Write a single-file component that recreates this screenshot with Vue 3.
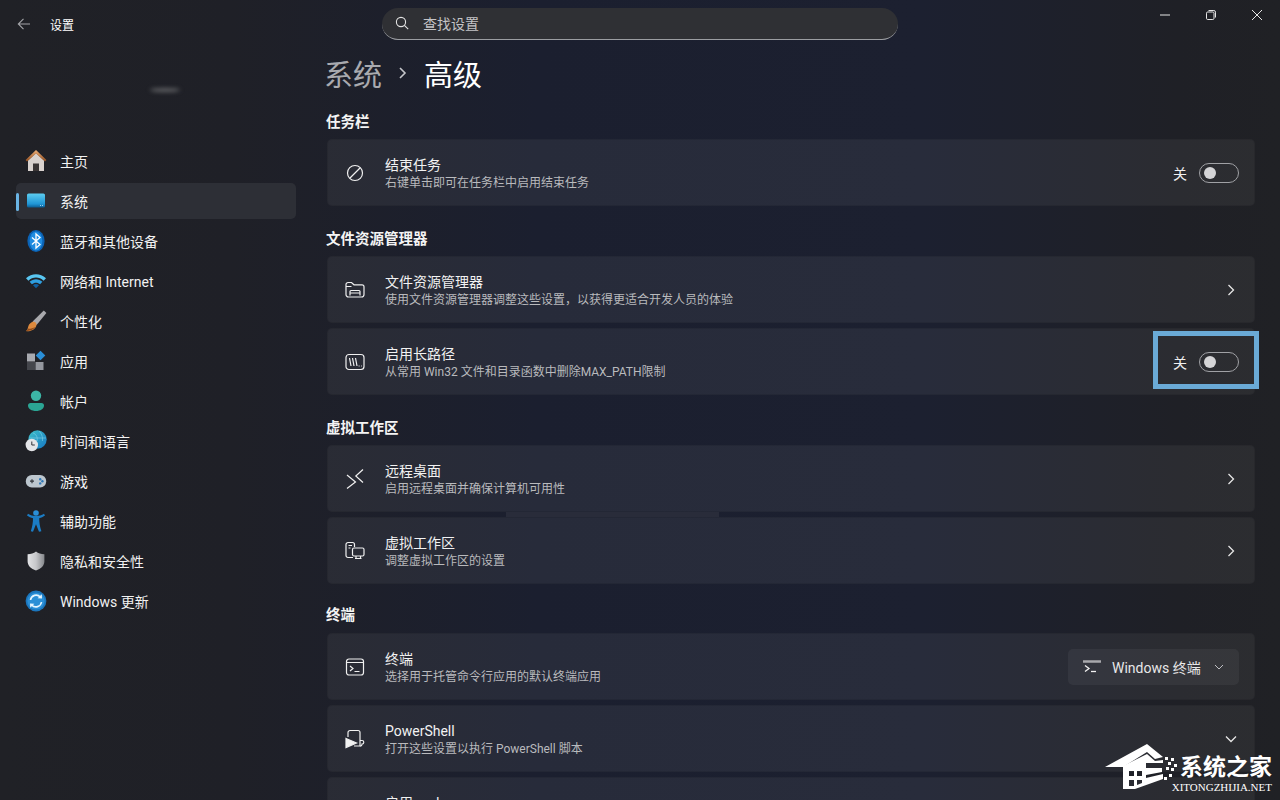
<template>
  <div class="settings">
    <!-- title bar -->
    <header class="titlebar">
      <div class="title-left">
        <svg class="back" viewBox="0 0 14 14" width="14" height="14"><path d="M13 7H1.500M6.500 1.800 1.300 7l5.200 5.200" fill="none" stroke="#a3a4a8" stroke-width="1.100"/></svg>
        <span>设置</span>
      </div>
      <div class="search">
        <svg viewBox="0 0 14 14" width="14" height="14"><circle cx="6" cy="6" r="4.600" fill="none" stroke="#e4e4e4" stroke-width="1.100"/><path d="m9.400 9.400 3.800 3.800" stroke="#e4e4e4" stroke-width="1.100"/></svg>
        <span>查找设置</span>
      </div>
      <div class="win-btns">
        <svg viewBox="0 0 10 10" width="10" height="10"><path d="M0 5h10" stroke="#e6e6e6" stroke-width="1"/></svg>
        <svg viewBox="0 0 10 10" width="10" height="10"><rect x=".5" y="2" width="7.500" height="7.500" rx="1.200" fill="none" stroke="#e6e6e6"/><path d="M2.500.5h5.300a1.700 1.700 0 0 1 1.700 1.700v5.300" fill="none" stroke="#e6e6e6"/></svg>
        <svg viewBox="0 0 10 10" width="10" height="10"><path d="m0 0 10 10M10 0 0 10" stroke="#e6e6e6" stroke-width="1"/></svg>
      </div>
    </header>

    <div class="body">
      <!-- side navigation -->
      <aside class="sidebar">
        <div class="account-smudge"></div>
        <nav class="nav">
          <a class="nav-item">
            <svg class="nav-icon" viewBox="0 0 22 22"><defs><linearGradient id="roof" x1="0" y1="0" x2="0" y2="1"><stop offset="0" stop-color="#f0b078"/><stop offset="1" stop-color="#8d4a1c"/></linearGradient></defs><path d="M3 10.500 11 3l8 7.500V21H3z" fill="#d9d2ce"/><path d="M8 21v-7.500h6V21z" fill="#3a3535"/><path d="M11 0 .6 10l1.400 1.600L11 3.600l9 8 1.400-1.600z" fill="url(#roof)"/></svg>
            <span>主页</span>
          </a>
          <a class="nav-item active">
            <svg class="nav-icon" viewBox="0 0 22 22"><defs><linearGradient id="screen" x1="0" y1="0" x2="0" y2="1"><stop offset="0" stop-color="#5ccdf0"/><stop offset=".75" stop-color="#1f94d4"/><stop offset="1" stop-color="#0b5c92"/></linearGradient></defs><rect x="2" y="3.500" width="18" height="14" rx="1.600" fill="url(#screen)"/><path d="M15 15.500h1M17 15.500h1" stroke="#bfe6f7" stroke-width=".8"/></svg>
            <span>系统</span>
          </a>
          <a class="nav-item">
            <svg class="nav-icon" viewBox="0 0 22 22"><ellipse cx="11" cy="11" rx="8.600" ry="11" fill="#0b62b4"/><ellipse cx="11" cy="11" rx="6.400" ry="9.600" fill="#1f8be0"/><path d="m7 7.400 8 7.200L11 18V4l4 3.400-8 7.200" fill="none" stroke="#fff" stroke-width="1.300"/></svg>
            <span>蓝牙和其他设备</span>
          </a>
          <a class="nav-item">
            <svg class="nav-icon" viewBox="0 0 22 22"><path d="M1 8.200C6.600 2.800 15.400 2.800 21 8.200l-2.400 2.500C14.200 6.500 7.800 6.500 3.400 10.700z" fill="#59c6f1"/><path d="M4.600 11.800c3.600-3.400 9.200-3.400 12.800 0l-2.300 2.400c-2.300-2.100-5.900-2.100-8.200 0z" fill="#2f9fe0"/><path d="M8 15.200c1.700-1.500 4.300-1.500 6 0l-3 3.100z" fill="#0f5f9f"/></svg>
            <span>网络和 Internet</span>
          </a>
          <a class="nav-item">
            <svg class="nav-icon" viewBox="0 0 22 22"><path d="M18.800.6 21.400 3 11.600 15 7.600 11.400z" fill="#a9a9ad"/><path d="M7.600 11.800c2.400-.6 4.400 1.200 3.800 3.600C10.600 19.200 5 22 1 21c2-1.400 1.600-3 2.400-5 .7-1.800 2.300-3.600 4.200-4.200z" fill="#dd8a3e"/><path d="M1 21c3.800.4 8-1.600 9.800-4.400C8 19 4.600 18.800 3 18.400 2.700 19.400 2.200 20.200 1 21z" fill="#8f4a1a"/></svg>
            <span>个性化</span>
          </a>
          <a class="nav-item">
            <svg class="nav-icon" viewBox="0 0 22 22"><rect x="2" y="3.500" width="8" height="8" fill="#a8aab0"/><rect x="2" y="12" width="8" height="8" fill="#44464c"/><rect x="10.500" y="12" width="8" height="8" fill="#94979e"/><path d="m15.500 .8 4.800 4.700-4.800 4.800-4.800-4.800z" fill="#2a8fd8"/></svg>
            <span>应用</span>
          </a>
          <a class="nav-item">
            <svg class="nav-icon" viewBox="0 0 22 22"><circle cx="11" cy="5.800" r="5.200" fill="#3cb6a6"/><path d="M3 15.500c0-1.500 1-2.500 2.500-2.500h11c1.500 0 2.500 1 2.500 2.500 0 3.400-3.600 5.500-8 5.500s-8-2.100-8-5.500z" fill="#2ba594"/></svg>
            <span>帐户</span>
          </a>
          <a class="nav-item">
            <svg class="nav-icon" viewBox="0 0 22 22"><defs><linearGradient id="globe" x1="0" y1="0" x2="1" y2="1"><stop offset="0" stop-color="#3ec0c8"/><stop offset="1" stop-color="#1778c4"/></linearGradient></defs><circle cx="12.500" cy="9.500" r="9.200" fill="url(#globe)"/><path d="M8 3c3 1 5 4 4 8M14 1c2 2 4 5 3.500 10M4 8h17" stroke="#7fd2e8" stroke-width=".6" fill="none"/><circle cx="6.800" cy="15" r="6.200" fill="#e4e5e8"/><path d="M6.800 11.500V15h3" fill="none" stroke="#33343a" stroke-width="1"/></svg>
            <span>时间和语言</span>
          </a>
          <a class="nav-item">
            <svg class="nav-icon" viewBox="0 0 22 22"><rect x=".8" y="5" width="20.400" height="12.500" rx="6" fill="#bcc6ce"/><path d="M5 11.200h4M7 9.200v4" stroke="#33373d" stroke-width="1.200"/><circle cx="15.200" cy="9.200" r="1.200" fill="#2f78b8"/><circle cx="17.400" cy="11.300" r="1.200" fill="#2f78b8"/><circle cx="15.200" cy="13.400" r="1.200" fill="#2f78b8"/></svg>
            <span>游戏</span>
          </a>
          <a class="nav-item">
            <svg class="nav-icon" viewBox="0 0 22 22"><circle cx="11" cy="3" r="2.800" fill="#2a8fd8"/><path d="M2 5.600 3 3.800c2.500 1.400 5 2.200 8 2.200s5.500-.8 8-2.200l1 1.800c-1.900 1.300-3.800 2.200-5.800 2.700 0 4 .6 8 2.200 13L14 21.800l-3-7.500-3 7.500-2.200-.5c1.600-5 2.200-9 2.200-13-2.200-.5-4.100-1.400-6-2.700z" fill="#1b7cc4"/></svg>
            <span>辅助功能</span>
          </a>
          <a class="nav-item">
            <svg class="nav-icon" viewBox="0 0 22 22"><defs><linearGradient id="shield" x1="0" y1="0" x2="1" y2="0"><stop offset="0" stop-color="#e2e3e5"/><stop offset=".5" stop-color="#c6c7ca"/><stop offset="1" stop-color="#85878b"/></linearGradient></defs><path d="M11 1.500c2.300 1.800 5 2.700 8.400 2.700v7c0 4.500-3.400 7.500-8.400 9.300-5-1.800-8.400-4.800-8.400-9.300v-7c3.400 0 6.100-.9 8.400-2.700z" fill="url(#shield)"/></svg>
            <span>隐私和安全性</span>
          </a>
          <a class="nav-item">
            <svg class="nav-icon" viewBox="0 0 22 22"><circle cx="11" cy="11" r="10.400" fill="#1b76bd"/><circle cx="11" cy="11" r="8.600" fill="#2a8fd6"/><path d="M5.500 10a5.600 5.600 0 0 1 9.800-2.900M16.500 12a5.600 5.600 0 0 1-9.800 2.900" fill="none" stroke="#e4f5ff" stroke-width="1.600"/><path d="m16.800 4.200.2 4.400-4.400-.3zM5.200 17.800 5 13.400l4.400.3z" fill="#e4f5ff"/></svg>
            <span>Windows 更新</span>
          </a>
        </nav>
      </aside>

      <!-- settings content -->
      <main class="content">
        <h1 class="crumb">
          <span class="crumb-parent">系统</span>
          <svg viewBox="0 0 10 14" width="10" height="14"><path d="m2 2 5 5-5 5" fill="none" stroke="#c5c6ca" stroke-width="1.600"/></svg>
          <span class="crumb-current">高级</span>
        </h1>

        <h2 class="section first">任务栏</h2>
        <div class="row">
          <svg class="row-icon" viewBox="0 0 20 20"><circle cx="10" cy="10" r="7.500"/><path d="M5 15 15 5"/></svg>
          <div class="row-text">
            <div class="row-title">结束任务</div>
            <div class="row-sub">右键单击即可在任务栏中启用结束任务</div>
          </div>
          <span class="toggle-label">关</span>
          <span class="toggle"><i></i></span>
        </div>

        <h2 class="section">文件资源管理器</h2>
        <div class="row">
          <svg class="row-icon" viewBox="0 0 20 20"><path d="M1 14.500V4.500A2 2 0 0 1 3 2.500h3.500L9 4.800h8a2 2 0 0 1 2 2v7.700a2.500 2.500 0 0 1-2.500 2.500h-13A2.500 2.500 0 0 1 1 14.500zM1 6.500h5.500"/><path d="M5 15.500v-4a1 1 0 0 1 1-1h8a1 1 0 0 1 1 1v4M5 13h10"/></svg>
          <div class="row-text">
            <div class="row-title">文件资源管理器</div>
            <div class="row-sub">使用文件资源管理器调整这些设置，以获得更适合开发人员的体验</div>
          </div>
          <svg class="chevron" viewBox="0 0 10 14"><path d="m2.500 2 5 5-5 5"/></svg>
        </div>
        <div class="row gap">
          <svg class="row-icon" viewBox="0 0 20 20"><rect x="1" y="2.500" width="18" height="15" rx="3"/><path d="m4.500 6 1.500 8M7.500 6 9 14M10.500 6l1.500 8M13.600 14h1M16 14h.8"/></svg>
          <div class="row-text">
            <div class="row-title">启用长路径</div>
            <div class="row-sub">从常用 Win32 文件和目录函数中删除MAX_PATH限制</div>
          </div>
          <span class="toggle-label">关</span>
          <span class="toggle"><i></i></span>
          <div class="callout"></div>
        </div>

        <h2 class="section">虚拟工作区</h2>
        <div class="row">
          <svg class="row-icon" viewBox="0 0 20 20"><path d="M2 6l8.500 7L2 19.500M18 .5 10.800 7l7.200 6.500"/></svg>
          <div class="row-text">
            <div class="row-title">远程桌面</div>
            <div class="row-sub">启用远程桌面并确保计算机可用性</div>
          </div>
          <svg class="chevron" viewBox="0 0 10 14"><path d="m2.500 2 5 5-5 5"/></svg>
          <div class="gap-smudge"></div>
        </div>
        <div class="row gap">
          <svg class="row-icon" viewBox="0 0 20 20"><path d="M8 16.500H3a2 2 0 0 1-2-2V3.500a2 2 0 0 1 2-2h4.500a2 2 0 0 1 2 2V6M3.500 4.500h3.500M3.500 7h2"/><rect x="7.500" y="7" width="11.500" height="8" rx="1.500"/><path d="M11 15v2.500M15.500 15v2.500M10 17.500h6.500"/></svg>
          <div class="row-text">
            <div class="row-title">虚拟工作区</div>
            <div class="row-sub">调整虚拟工作区的设置</div>
          </div>
          <svg class="chevron" viewBox="0 0 10 14"><path d="m2.500 2 5 5-5 5"/></svg>
        </div>

        <h2 class="section tight">终端</h2>
        <div class="row">
          <svg class="row-icon" viewBox="0 0 20 20"><rect x="1.500" y="2" width="17" height="16" rx="2.500"/><path d="M1.500 5.500h17M5 9l3 2.500L5 14M9.500 14.500h5"/></svg>
          <div class="row-text">
            <div class="row-title">终端</div>
            <div class="row-sub">选择用于托管命令行应用的默认终端应用</div>
          </div>
          <div class="dropdown">
            <svg viewBox="0 0 18 14" width="18" height="14"><path d="M0 1.500h18" stroke="#a8a9ad" stroke-width="2.500"/><path d="m2 5.500 4 3-4 3" fill="none" stroke="#f2f2f2" stroke-width="1.300"/><path d="M8 11.500h5" stroke="#f2f2f2" stroke-width="1.300"/></svg>
            <span>Windows 终端</span>
            <svg class="dd-arrow" viewBox="0 0 10 6" width="10" height="6"><path d="m1 1 4 4 4-4" fill="none" stroke="#bdbec2" stroke-width="1"/></svg>
          </div>
        </div>
        <div class="row gap">
          <svg class="row-icon" viewBox="0 0 20 20"><path d="M3 8V3.500a2 2 0 0 1 2-2h8a2 2 0 0 1 2 2V17h-6"/><path d="M15 11.500h2a1.800 1.800 0 0 1 0 3.600 1.800 1.800 0 0 1-2 1.900"/><path d="M1 9.500 11.500 14 1 18.500z" fill="#f2f2f2"/></svg>
          <div class="row-text">
            <div class="row-title">PowerShell</div>
            <div class="row-sub">打开这些设置以执行 PowerShell 脚本</div>
          </div>
          <svg class="chevron down" viewBox="0 0 14 10"><path d="m2 2.500 5 5 5-5"/></svg>
        </div>
        <div class="row gap">
          <svg class="row-icon" viewBox="0 0 20 20"></svg>
          <div class="row-text">
            <div class="row-title">启用 sudo</div>
            <div class="row-sub">&nbsp;</div>
          </div>
        </div>
      </main>
    </div>

    <!-- site watermark -->
    <div class="watermark">
      <svg viewBox="0 0 72 46" width="72" height="46">
        <path d="M0 23 42 0 58 13 50 15 42 8 18 23z" fill="#fff"/>
        <path fill-rule="evenodd" d="M18 22 42 10 50 17 58 16V19H41V24H57V28L41 31V34L58 30V35L30 45H18zM24 27H29V32H24zM32 27H37V32H32zM24 36H29V42H24zM32 36H37V39L32 41z" fill="#fff"/>
        <path d="M60 13h3v3h-3zM66 14h3v3h-3zM63 18h3v3h-3zM69 20h3v3h-3zM66 24h3v3h-3zM61 23h3v3h-3zM64 30h3v3h-3zM59 33h3v3h-3z" fill="#fff"/>
      </svg>
      <div class="wm-text">
        <div class="wm-cn">系统之家</div>
        <div class="wm-en">XITONGZHIJIA.NET</div>
      </div>
    </div>
  </div>
</template>

<script setup>
// static screen, nothing to wire up
</script>

<style>
html, body {
  margin: 0;
  background: #1c2030;
  overflow: hidden;
}
</style>

<style scoped>
.settings {
  position: relative;
  width: 1280px;
  height: 800px;
  overflow: hidden;
  color: #fff;
  font-family: Roboto, "Noto Sans CJK SC", sans-serif;
  font-size: 14px;
  background: linear-gradient(90deg, #202126 0%, #1f2027 18%, #1b1f2f 42%, #1c2030 72%, #1f2026 92%, #202125 100%);
}

.titlebar {
  display: grid;
  grid-template-columns: 1fr 516px 1fr;
  align-items: start;
  height: 48px;
}

.title-left {
  display: flex;
  align-items: center;
  gap: 19px;
  height: 48px;
  padding-left: 17px;
  font-size: 12px;
}

.search {
  display: flex;
  align-items: center;
  gap: 14px;
  box-sizing: border-box;
  height: 32px;
  margin-top: 8px;
  padding: 0 0 1px 13px;
  background: #2f3034;
  border-bottom: 1px solid #9b9da1;
  border-radius: 16px;
  color: #c4c4c6;
}

.win-btns {
  display: flex;
  justify-content: flex-end;
  gap: 36px;
  padding: 10px 18px 0 0;
}

.body {
  display: flex;
}

.sidebar {
  position: relative;
  width: 296px;
  padding-left: 16px;
  flex-shrink: 0;
}

.account-smudge {
  position: absolute;
  left: 150px;
  top: 40px;
  width: 30px;
  height: 4px;
  border-radius: 50%;
  background: #5f6063;
  filter: blur(2px);
}

.nav {
  display: flex;
  flex-direction: column;
  gap: 4px;
  width: 280px;
  padding-top: 95px;
}

.nav-item {
  position: relative;
  display: flex;
  align-items: center;
  gap: 13px;
  height: 36px;
  padding-left: 9px;
  border-radius: 5px;
  color: #f2f2f2;
}

.nav-item.active {
  background: #2d2f36;
}

.nav-item.active::before {
  content: "";
  position: absolute;
  left: 0;
  top: 10px;
  width: 3px;
  height: 18px;
  border-radius: 2px;
  background: #6ab4e4;
}

.nav-icon {
  width: 22px;
  height: 22px;
  flex-shrink: 0;
}

.content {
  width: 928px;
  margin-left: 15px;
  flex-shrink: 0;
}

.crumb {
  display: flex;
  align-items: center;
  gap: 16px;
  height: 40px;
  margin: 5px 0 0 -3px;
  font-size: 29px;
  font-weight: 400;
}

.crumb-parent {
  color: #a9aaaf;
}

.section {
  height: 50px;
  margin: 0 0 0 -1px;
  display: flex;
  align-items: center;
  padding-top: 12px;
  box-sizing: border-box;
  font-size: 14.5px;
  font-weight: 600;
  color: #f4f4f4;
}

.section.first {
  height: 46px;
  padding-top: 8px;
}

.section.tight {
  height: 49px;
  padding-top: 10px;
}

.row {
  position: relative;
  display: flex;
  align-items: center;
  box-sizing: border-box;
  height: 67px;
  padding: 0 15px 0 17px;
  background: rgba(255, 255, 255, 0.055);
  border: 1px solid rgba(0, 0, 0, 0.08);
  border-radius: 5px;
}

.row.gap {
  margin-top: 5px;
}

.row-icon {
  width: 20px;
  height: 20px;
  flex-shrink: 0;
  fill: none;
  stroke: #f0f0f0;
  stroke-width: 1.2;
  overflow: visible;
}

.row-text {
  flex: 1;
  margin-left: 20px;
  padding-top: 2px;
}

.row-title {
  line-height: 18px;
  color: #f2f2f2;
}

.row-sub {
  line-height: 18px;
  font-size: 12px;
  color: #b9babd;
}

.toggle-label {
  margin-right: 12px;
  color: #f0f0f0;
}

.toggle {
  display: flex;
  align-items: center;
  box-sizing: border-box;
  width: 40px;
  height: 20px;
  padding-left: 4px;
  border: 1px solid #a0a1a5;
  border-radius: 10px;
}

.toggle i {
  width: 12px;
  height: 12px;
  border-radius: 50%;
  background: #d4d4d6;
}

.chevron {
  width: 10px;
  height: 14px;
  margin-right: 3px;
  fill: none;
  stroke: #e6e6e6;
  stroke-width: 1.3;
}

.chevron.down {
  width: 14px;
  height: 10px;
  margin-right: 1px;
}

.callout {
  position: absolute;
  right: -5px;
  top: 2px;
  width: 106px;
  height: 58px;
  box-sizing: border-box;
  border: 5px solid #6aaad6;
}

.gap-smudge {
  position: absolute;
  left: 178px;
  bottom: -6px;
  width: 213px;
  height: 5px;
  background: #292c3a;
}

.dropdown {
  display: flex;
  align-items: center;
  box-sizing: border-box;
  width: 171px;
  height: 36px;
  padding: 0 15px;
  background: rgba(255, 255, 255, 0.05);
  border-radius: 5px;
  color: #e8e8e8;
}

.dropdown span {
  margin-left: 11px;
  white-space: nowrap;
}

.dd-arrow {
  margin-left: auto;
}

.watermark {
  position: absolute;
  right: 8px;
  bottom: 7px;
  display: flex;
  align-items: flex-start;
}

.wm-text {
  margin-left: -5px;
  padding-top: 8px;
  text-align: right;
}

.wm-cn {
  font-family: "Noto Sans CJK SC", sans-serif;
  font-size: 23px;
  font-weight: 700;
  line-height: 26px;
}

.wm-en {
  margin-top: 4px;
  font-family: "Liberation Serif", serif;
  font-size: 11px;
  line-height: 11px;
  white-space: nowrap;
}
</style>
